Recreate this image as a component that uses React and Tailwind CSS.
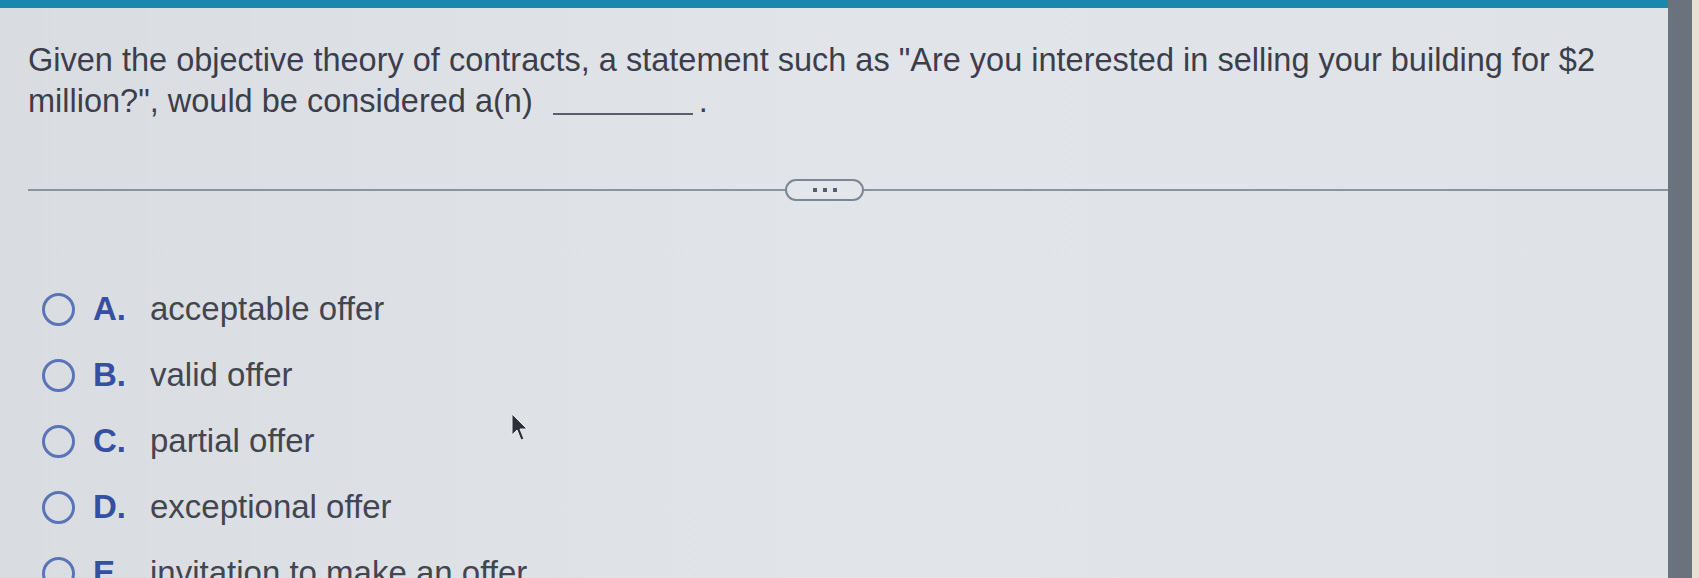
import React from 'react';

const options = [
  { letter: 'A.', text: 'acceptable offer' },
  { letter: 'B.', text: 'valid offer' },
  { letter: 'C.', text: 'partial offer' },
  { letter: 'D.', text: 'exceptional offer' },
  { letter: 'E.', text: 'invitation to make an offer' },
];

function Radio() {
  return <div className="w-[33px] h-[33px] rounded-full border-[3px] border-[#5a74b5] shrink-0" />;
}

export default function App() {
  return (
    <div
      className="w-[1699px] h-[578px] overflow-hidden flex bg-[#e4ded2]"
      style={{ fontFamily: '"Liberation Sans", Arial, sans-serif' }}
    >
      <div className="relative flex-1 flex flex-col bg-gradient-to-r from-[#d9dde2] via-[#e1e5ea] to-[#dfe3e8]">
        {/* top bar */}
        <div className="h-[8px] bg-[#1a88ae] shrink-0" />

        {/* question */}
        <div className="pl-[28px] pt-[32px] pr-[40px] text-[32.5px] leading-[41px] text-[#3c3e4b] whitespace-nowrap">
          <p>
            Given the objective theory of contracts, a statement such as "Are you interested in selling your building for $2
            <br />
            million?", would be considered a(n)
            <span className="inline-block ml-[20px] w-[140px] border-b-2 border-[#5a5d6a] align-baseline translate-y-[3px]" />
            <span className="ml-[6px]">.</span>
          </p>
        </div>

        {/* separator */}
        <div className="mt-[57px] flex items-center">
          <div className="ml-[28px] w-[757px] h-[2px] bg-[#8a93a1]" />
          <div className="w-[79px] h-[22px] rounded-full border-2 border-[#7c8695] bg-[#e3e7ec] flex items-center justify-center gap-[6px]">
            <span className="w-[4px] h-[4px] bg-[#555e6e]" />
            <span className="w-[4px] h-[4px] bg-[#555e6e]" />
            <span className="w-[4px] h-[4px] bg-[#555e6e]" />
          </div>
          <div className="flex-1 h-[2px] bg-[#8a93a1]" />
        </div>

        {/* options */}
        <div className="mt-[75px] flex flex-col">
          {options.map((o) => (
            <div key={o.letter} className="h-[66px] flex items-center pl-[42px]">
              <Radio />
              <span className="ml-[18px] w-[57px] text-[33px] font-bold text-[#3550a3]">{o.letter}</span>
              <span className="text-[33px] text-[#43454f]">{o.text}</span>
            </div>
          ))}
        </div>

        {/* mouse cursor */}
        <svg className="absolute left-[511px] top-[413px]" width="20" height="32" viewBox="0 0 20 32">
          <path d="M1 1 L1 22 L6 17 L10 27 L13 26 L9 16 L16 16 Z" fill="#2b2f38" stroke="#e8ebef" strokeWidth="1" />
        </svg>
      </div>
      <div className="w-[24px] bg-[#6a727d] shrink-0" />
      <div className="w-[7px] bg-[#e6dfd2] shrink-0" />
    </div>
  );
}
